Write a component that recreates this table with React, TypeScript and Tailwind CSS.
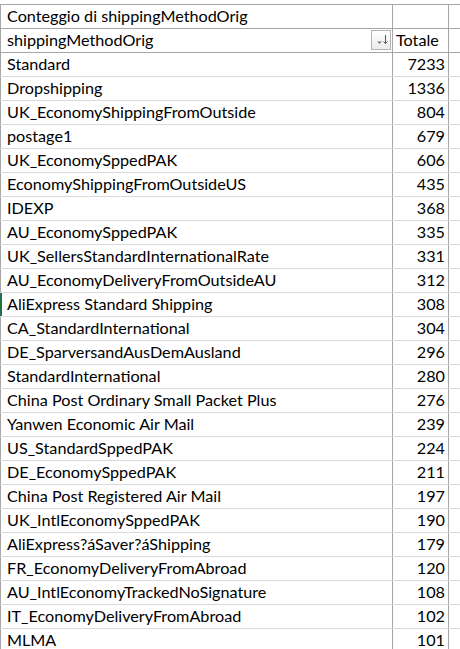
const ROWS: [string, number][] = [
  ["Standard", 7233],
  ["Dropshipping", 1336],
  ["UK_EconomyShippingFromOutside", 804],
  ["postage1", 679],
  ["UK_EconomySppedPAK", 606],
  ["EconomyShippingFromOutsideUS", 435],
  ["IDEXP", 368],
  ["AU_EconomySppedPAK", 335],
  ["UK_SellersStandardInternationalRate", 331],
  ["AU_EconomyDeliveryFromOutsideAU", 312],
  ["AliExpress Standard Shipping", 308],
  ["CA_StandardInternational", 304],
  ["DE_SparversandAusDemAusland", 296],
  ["StandardInternational", 280],
  ["China Post Ordinary Small Packet Plus", 276],
  ["Yanwen Economic Air Mail", 239],
  ["US_StandardSppedPAK", 224],
  ["DE_EconomySppedPAK", 211],
  ["China Post Registered Air Mail", 197],
  ["UK_IntlEconomySppedPAK", 190],
  ["AliExpress?áSaver?áShipping", 179],
  ["FR_EconomyDeliveryFromAbroad", 120],
  ["AU_IntlEconomyTrackedNoSignature", 108],
  ["IT_EconomyDeliveryFromAbroad", 102],
  ["MLMA", 101],
];

function SortButton() {
  return (
    <div className="absolute right-[1px] top-[1px] h-[20px] w-[20px] border border-[#b4b4b4] bg-gradient-to-b from-white to-[#ececec]">
      <svg width="18" height="18" viewBox="0 0 18 18" className="block">
        <path d="M5 10.5h5l-2.5 2.5z" fill="#7a7a7a" />
        <path d="M13.5 4v8.5" stroke="#555" strokeWidth="1" />
        <path d="M11.5 10.5l2 2 2-2" stroke="#555" strokeWidth="1" fill="none" />
      </svg>
    </div>
  );
}

export default function App() {
  return (
    <div className="min-h-screen bg-white pt-[4px] font-['Lato',sans-serif] text-[16.2px] leading-[20px] text-black">
      <div className="border-t border-[#a6a6a6]">
        <div className="flex h-[24px] border-b border-[#a6a6a6]">
          <div className="flex w-[393px] items-end border-l border-r border-[#a6a6a6] pb-[2px] pl-[6px]">
            Conteggio di shippingMethodOrig
          </div>
          <div className="w-[56px] border-r border-[#a6a6a6]" />
          <div className="flex-1" />
        </div>
        <div className="flex h-[24px] border-b border-[#a6a6a6]">
          <div className="relative flex w-[393px] items-end border-l border-r border-[#a6a6a6] pb-[2px] pl-[6px]">
            shippingMethodOrig
            <SortButton />
          </div>
          <div className="flex w-[56px] items-end border-r border-[#a6a6a6] pb-[2px] pl-[3px]">
            Totale
          </div>
          <div className="flex-1" />
        </div>
        {ROWS.map(([name, n]) => (
          <div key={name} className="flex h-[24px] border-b border-[#dadada]">
            <div
              className={
                name === "AliExpress Standard Shipping"
                  ? "flex w-[393px] items-end whitespace-nowrap border-l-2 border-r border-l-[#217346] border-r-[#a6a6a6] pb-[2px] pl-[5px]"
                  : "flex w-[393px] items-end whitespace-nowrap border-l border-r border-[#a6a6a6] pb-[2px] pl-[6px]"
              }
            >
              {name}
            </div>
            <div className="flex w-[56px] items-end justify-end border-r border-[#a6a6a6] pb-[2px] pr-[3px]">
              {n}
            </div>
            <div className="flex-1" />
          </div>
        ))}
      </div>
    </div>
  );
}
